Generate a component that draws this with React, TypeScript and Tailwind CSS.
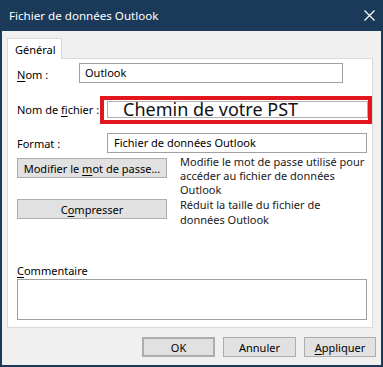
const font = { fontFamily: '"Noto Sans", "Segoe UI", sans-serif' };

const U: React.FC<{ children: React.ReactNode }> = ({ children }) => (
  <span className="underline underline-offset-2">{children}</span>
);

const Btn: React.FC<{ children: React.ReactNode; className?: string }> = ({
  children,
  className = "",
}) => (
  <button
    className={`h-[20px] bg-[#e1e1e1] border border-[#adadad] text-[11px] leading-none text-black flex items-center justify-center whitespace-nowrap ${className}`}
  >
    <span>{children}</span>
  </button>
);

export default function App() {
  return (
    <div
      className="w-[383px] h-[367px] bg-[#1b3a5a] px-[2px] pb-[2px] flex flex-col text-[11px] text-black"
      style={font}
    >
      {/* title bar */}
      <div className="h-[31px] shrink-0 flex items-center justify-between pl-[7px] pr-[6px]">
        <span className="text-white text-[11.6px]">Fichier de données Outlook</span>
        <svg width="11" height="11" viewBox="0 0 11 11">
          <path d="M0.5 0.5 L10.5 10.5 M10.5 0.5 L0.5 10.5" stroke="#fff" strokeWidth="1.2" />
        </svg>
      </div>

      <div className="flex-1 bg-[#f0f0f0] px-[5px] flex flex-col">
        {/* tab */}
        <div className="mt-[7px] flex">
          <div className="w-[55px] h-[21px] bg-white border border-b-0 border-[#d9d9d9] pl-[7px] pt-[3px] -mb-[1px] relative z-10">
            Général
          </div>
        </div>

        {/* panel */}
        <div className="w-[366px] h-[270px] bg-white border border-[#d9d9d9] pl-[9px] flex flex-col whitespace-nowrap">
          {/* Nom */}
          <div className="mt-[4px] flex items-center h-[20px]">
            <span className="w-[62px] mt-[4px]">
              <U>N</U>om :
            </span>
            <div className="w-[264px] h-[20px] border border-[#a0a0a0] px-[5px] flex items-center">
              Outlook
            </div>
          </div>

          {/* Nom de fichier */}
          <div className="mt-[13px] flex items-center h-[28px]">
            <span className="w-[83px]">
              Nom de <U>f</U>ichier :
            </span>
            <div className="w-[272px] h-[28px] border-[4px] border-[#e3161d] pl-[3px] pt-[1px] pb-[2px]">
              <div className="h-full border border-[#b0b0b0] pl-[15px] flex items-center text-[18px] text-[#111]">
                Chemin de votre PST
              </div>
            </div>
          </div>

          {/* Format */}
          <div className="mt-[9px] flex items-center h-[20px]">
            <span className="w-[90px] mt-[2px]">Format :</span>
            <div className="w-[260px] h-[20px] border border-[#a0a0a0] px-[6px] flex items-center">
              Fichier de données Outlook
            </div>
          </div>

          {/* Modifier */}
          <div className="mt-[5px] h-[41px] flex items-start">
            <Btn className="w-[150px]">
              Modifier le <U>m</U>ot de passe...
            </Btn>
            <p className="ml-[13px] -mt-[3px] leading-[14px] text-[#1a1a1a] w-[190px] whitespace-normal">
              Modifie le mot de passe utilisé pour accéder au fichier de données Outlook
            </p>
          </div>

          {/* Compresser */}
          <div className="flex items-start">
            <Btn className="w-[150px]">
              C<U>o</U>mpresser
            </Btn>
            <p className="ml-[13px] -mt-[2px] leading-[15px] text-[#1a1a1a] w-[160px] whitespace-normal">
              Réduit la taille du fichier de données Outlook
            </p>
          </div>

          {/* Commentaire */}
          <div className="mt-[36px] leading-[15px]">
            <U>C</U>ommentaire
          </div>
          <div className="mt-[1px] w-[350px] h-[41px] border border-[#a0a0a0]" />
        </div>

        {/* footer buttons */}
        <div className="mt-[9px] flex justify-end gap-[8px]">
          <Btn className="w-[73px] border-2 border-[#0078d7]">OK</Btn>
          <Btn className="w-[73px]">Annuler</Btn>
          <Btn className="w-[72px]">
            <U>A</U>ppliquer
          </Btn>
        </div>
      </div>
    </div>
  );
}
